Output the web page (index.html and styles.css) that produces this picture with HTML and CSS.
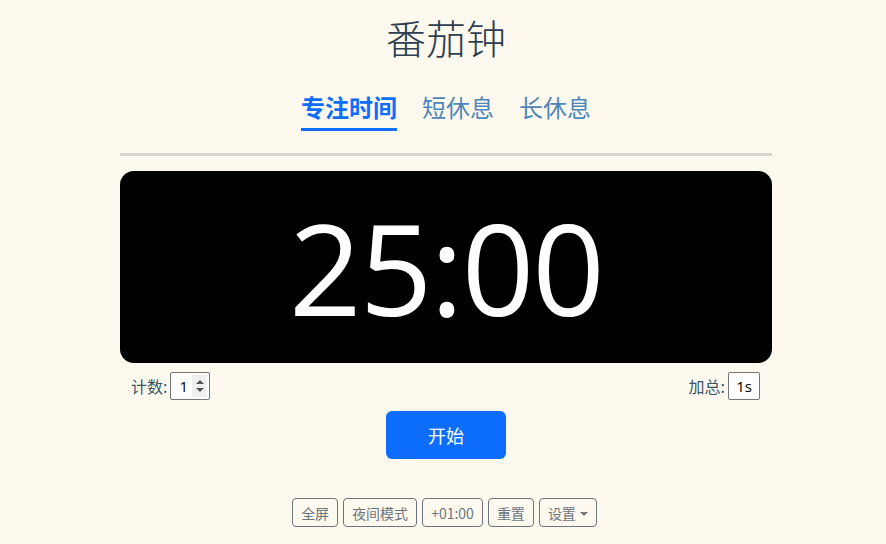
FILE: index.html
```html
<!DOCTYPE html>
<html lang="zh-CN">

<head>
  <meta charset="UTF-8" />
  <title>番茄钟</title>
  <meta name="viewport" content="width=device-width, initial-scale=1.0" />
  <link rel="stylesheet" href="styles.css">
</head>

<body>
  <div class="container">
    <h1>番茄钟</h1>

    <!-- 模式切换 -->
    <div class="tabs">
      <button class="tab active">专注时间</button>
      <button class="tab">短休息</button>
      <button class="tab">长休息</button>
    </div>

    <div class="timer">25:00</div>

    <!-- 计数与加总 -->
    <div class="stats">
      <label class="stat">计数: <span class="num-box">1<span class="spin"><i class="up"></i><i class="down"></i></span></span></label>
      <label class="stat">加总: <span class="sum-box">1s</span></label>
    </div>

    <button class="start-btn">开始</button>

    <div class="tools">
      <button class="tool-btn">全屏</button>
      <button class="tool-btn">夜间模式</button>
      <button class="tool-btn">+01:00</button>
      <button class="tool-btn">重置</button>
      <button class="tool-btn dropdown">设置</button>
    </div>
  </div>
</body>

</html>
```

FILE: styles.css
```css
body {
  margin: 0;
  padding: 0 0 0 6px;
  background: #fdf9ef;
  font-family: "Open Sans", "Noto Sans CJK SC", sans-serif;
  text-align: center;
}

.container {
  width: 652px;
  margin: 0 auto;
}

h1 {
  margin: 0;
  padding-top: 16px;
  height: 50px;
  font-family: "Liberation Serif", "Noto Sans CJK SC", serif;
  font-size: 40px;
  font-weight: 300;
  line-height: 50px;
  color: #2c3e50;
}

.tabs {
  display: flex;
  justify-content: center;
  gap: 25px;
  margin-top: 24px;
  padding-bottom: 22px;
  border-bottom: 3px solid #d9d6cf;
}

.tab {
  padding: 0 0 4px;
  border: none;
  border-bottom: 3px solid transparent;
  background: none;
  font-family: "Noto Sans CJK SC", sans-serif;
  font-size: 24px;
  line-height: 34px;
  color: #4f86b9;
  cursor: pointer;
}

.tab.active {
  color: #0d6efd;
  font-weight: bold;
  border-bottom-color: #0d6efd;
}

.timer {
  margin-top: 15px;
  height: 192px;
  background: #000;
  border-radius: 14px;
  color: #fff;
  font-family: "Open Sans", sans-serif;
  font-size: 127px;
  line-height: 192px;
  letter-spacing: -2px;
}

.stats {
  display: flex;
  justify-content: space-between;
  align-items: center;
  padding: 0 12px 0 11px;
  margin-top: 9px;
}

.stat {
  display: flex;
  align-items: center;
  gap: 3px;
  font-family: "Noto Sans CJK SC", sans-serif;
  font-size: 16px;
  color: #3b5566;
}

.num-box,
.sum-box {
  display: flex;
  align-items: center;
  height: 28px;
  box-sizing: border-box;
  border: 1px solid #767676;
  border-radius: 2px;
  background: #fff;
  font-family: "Open Sans", sans-serif;
  font-size: 15px;
  color: #000;
}

.num-box {
  width: 40px;
  padding-left: 8px;
  gap: 4px;
}

.sum-box {
  width: 32px;
  justify-content: center;
}

.spin {
  display: flex;
  flex-direction: column;
  justify-content: center;
  gap: 4px;
  width: 15px;
  height: 22px;
  background: #efefef;
  align-items: center;
}

.spin i {
  width: 0;
  height: 0;
  border-left: 4px solid transparent;
  border-right: 4px solid transparent;
}

.spin .up {
  border-bottom: 4px solid #555;
}

.spin .down {
  border-top: 4px solid #555;
}

.start-btn {
  margin-top: 11px;
  width: 120px;
  height: 48px;
  border: none;
  border-radius: 6px;
  background: #0d6efd;
  color: #fff;
  font-family: "Noto Sans CJK SC", sans-serif;
  font-size: 18px;
  cursor: pointer;
}

.tools {
  display: flex;
  justify-content: center;
  gap: 5px;
  margin-top: 39px;
  padding-right: 3px;
}

.tool-btn {
  height: 29px;
  padding: 0 8px;
  border: 1px solid #6c757d;
  border-radius: 4px;
  background: transparent;
  font-family: "Noto Sans CJK SC", sans-serif;
  font-size: 14px;
  color: #6c757d;
  cursor: pointer;
}

.dropdown::after {
  content: "";
  display: inline-block;
  margin-left: 4px;
  vertical-align: 3px;
  border-top: 4px solid #6c757d;
  border-left: 4px solid transparent;
  border-right: 4px solid transparent;
}
```
